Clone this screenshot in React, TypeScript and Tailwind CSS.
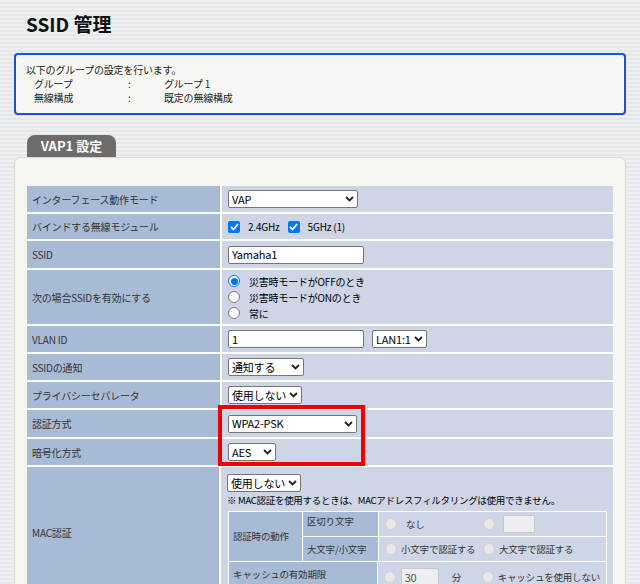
import React from "react";

const Sel = ({ w, v }: { w: number; v: string }) => (
  <div className="h-[18px] bg-white border border-[#767676] rounded-[2px] flex items-center justify-between px-[3px] text-[11px] text-black whitespace-nowrap" style={{ width: w }}>
    <span>{v}</span>
    <svg width="9" height="6" viewBox="0 0 9 6" className="shrink-0"><path d="M1 1l3.5 3.5L8 1" stroke="#222" strokeWidth="1.8" fill="none" /></svg>
  </div>
);
const Inp = ({ w, v, dis }: { w: number; v: string; dis?: boolean }) => (
  <div className={`h-[18px] border rounded-[2px] flex items-center px-[3px] text-[11px] ${dis ? "bg-[#eeeeee] border-[#c8c8c8] text-[#555]" : "bg-white border-[#767676] text-black"}`} style={{ width: w }}>{v}</div>
);
const Radio = ({ on, dis }: { on?: boolean; dis?: boolean }) => (
  <span className={`shrink-0 w-[12px] h-[12px] rounded-full border ${on ? "border-[#0075ff] bg-white" : dis ? "border-[#d0d0d0] bg-[#e8e8e8]" : "border-[#767676] bg-white"} flex items-center justify-center`}>
    {on && <span className="w-[7px] h-[7px] rounded-full bg-[#0075ff]" />}
  </span>
);
const Check = () => (
  <span className="w-[12px] h-[12px] rounded-[2px] bg-[#0075ff] flex items-center justify-center">
    <svg width="9" height="8" viewBox="0 0 9 8"><path d="M1 4l2.5 2.5L8 1" stroke="white" strokeWidth="1.8" fill="none" /></svg>
  </span>
);

const Row = ({ label, h, children }: { label: string; h: number; children: React.ReactNode }) => (
  <div className="flex gap-[2px]" style={{ height: h }}>
    <div className="w-[193px] bg-[#a8bbd6] flex items-center px-[5px] text-[#333]">{label}</div>
    <div className="flex-1 bg-[#cdd5e6] flex items-center px-[6px]">{children}</div>
  </div>
);

export default function App() {
  return (
    <div className="w-[640px] h-[584px] overflow-hidden whitespace-nowrap bg-[repeating-linear-gradient(0deg,#e6e7ea_0px,#e6e7ea_2px,#eeeff1_2px,#eeeff1_4px)] text-[10px] tracking-[-0.2px]" style={{ fontFamily: '"Noto Sans CJK JP", "Noto Sans", sans-serif' }}>
      <div className="pt-[12px] pl-[26px] text-[19px] font-bold text-[#111] leading-[24px] tracking-normal">SSID 管理</div>
      <div className="mt-[17px] mx-[14px] h-[62px] border-2 border-[#2050d0] rounded-[4px] bg-[#f6f6f2] px-[10px] pt-[8px] leading-[14px] text-[#222]">
        <div>以下のグループの設定を行います。</div>
        <div className="flex pl-[8px]"><span className="w-[94px]">グループ</span><span className="w-[36px]">:</span><span>グループ 1</span></div>
        <div className="flex pl-[8px]"><span className="w-[94px]">無線構成</span><span className="w-[36px]">:</span><span>既定の無線構成</span></div>
      </div>
      <div className="mt-[20px] ml-[27px] w-[89px] h-[22px] bg-[#6c6c6c] rounded-t-[8px] text-white font-bold text-[13px] tracking-normal flex items-center justify-center">VAP1 設定</div>
      <div className="mx-[14px] bg-[#f6f6f0] border border-[#d8d8d0] rounded-t-[6px] pt-[28px] px-[12px] h-[500px]">
        <div className="flex flex-col gap-[2px] bg-white">
          <Row label="インターフェース動作モード" h={26}><Sel w={130} v="VAP" /></Row>
          <Row label="バインドする無線モジュール" h={25}>
            <div className="flex items-center gap-[8px]"><Check /><span>2.4GHz</span><Check /><span>5GHz (1)</span></div>
          </Row>
          <Row label="SSID" h={27}><Inp w={136} v="Yamaha1" /></Row>
          <Row label="次の場合SSIDを有効にする" h={54}>
            <div className="flex flex-col gap-[1px] leading-[15px]">
              <div className="flex items-center gap-[9px]"><Radio on /><span>災害時モードがOFFのとき</span></div>
              <div className="flex items-center gap-[9px]"><Radio /><span>災害時モードがONのとき</span></div>
              <div className="flex items-center gap-[9px]"><Radio /><span>常に</span></div>
            </div>
          </Row>
          <Row label="VLAN ID" h={26}><div className="flex gap-[8px]"><Inp w={136} v="1" /><Sel w={55} v="LAN1:1" /></div></Row>
          <Row label="SSIDの通知" h={26}><Sel w={76} v="通知する" /></Row>
          <Row label="プライバシーセパレータ" h={26}><Sel w={74} v="使用しない" /></Row>
          <Row label="認証方式" h={27}><Sel w={129} v="WPA2-PSK" /></Row>
          <Row label="暗号化方式" h={26}><Sel w={48} v="AES" /></Row>
          <div className="flex gap-[2px] h-[130px]">
            <div className="w-[193px] bg-[#a8bbd6] flex items-center px-[5px] text-[#333]">MAC認証</div>
            <div className="flex-1 bg-[#cdd5e6] px-[6px] pt-[7px]">
              <Sel w={74} v="使用しない" />
              <div className="mt-[1px] leading-[14px] text-[9.5px] tracking-[-0.3px]">※ MAC認証を使用するときは、MACアドレスフィルタリングは使用できません。</div>
              <div className="mt-[4px] ml-[1px] w-[379px] bg-white p-[1px] flex flex-col gap-[1px] text-[#333] text-[9.5px]">
                <div className="flex gap-[1px] h-[49px]">
                  <div className="w-[73px] bg-[#a8bbd6] flex items-center px-[4px]">認証時の動作</div>
                  <div className="flex-1 flex flex-col gap-[1px]">
                    <div className="flex gap-[1px] flex-1">
                      <div className="w-[75px] bg-[#a8bbd6] px-[4px] pt-[2px]">区切り文字</div>
                      <div className="flex-1 bg-[#cdd5e6] flex items-center px-[6px]">
                        <span className="flex items-center gap-[9px] w-[98px]"><Radio dis /><span>なし</span></span>
                        <span className="flex items-center gap-[8px]"><Radio dis /><Inp w={32} v="" dis /></span>
                      </div>
                    </div>
                    <div className="flex gap-[1px] flex-1">
                      <div className="w-[75px] bg-[#a8bbd6] px-[4px] flex items-center">大文字/小文字</div>
                      <div className="flex-1 bg-[#cdd5e6] flex items-center px-[6px]">
                        <span className="flex items-center gap-[4px] w-[98px]"><Radio dis /><span>小文字で認証する</span></span>
                        <span className="flex items-center gap-[4px]"><Radio dis /><span>大文字で認証する</span></span>
                      </div>
                    </div>
                  </div>
                </div>
                <div className="flex gap-[1px] h-[30px]">
                  <div className="w-[149px] bg-[#a8bbd6] px-[4px] pt-[5px]">キャッシュの有効期限</div>
                  <div className="flex-1 bg-[#cdd5e6] flex items-center px-[6px]">
                    <span className="flex items-center gap-[5px] w-[98px]"><Radio dis /><Inp w={38} v="30" dis /><span className="ml-[8px]">分</span></span>
                    <span className="flex items-center gap-[4px]"><Radio dis /><span>キャッシュを使用しない</span></span>
                  </div>
                </div>
              </div>
            </div>
          </div>
        </div>
      </div>
      <div className="absolute left-[218px] top-[405px] w-[147px] h-[61px] border-4 border-[#ee0000] pointer-events-none" />
    </div>
  );
}
